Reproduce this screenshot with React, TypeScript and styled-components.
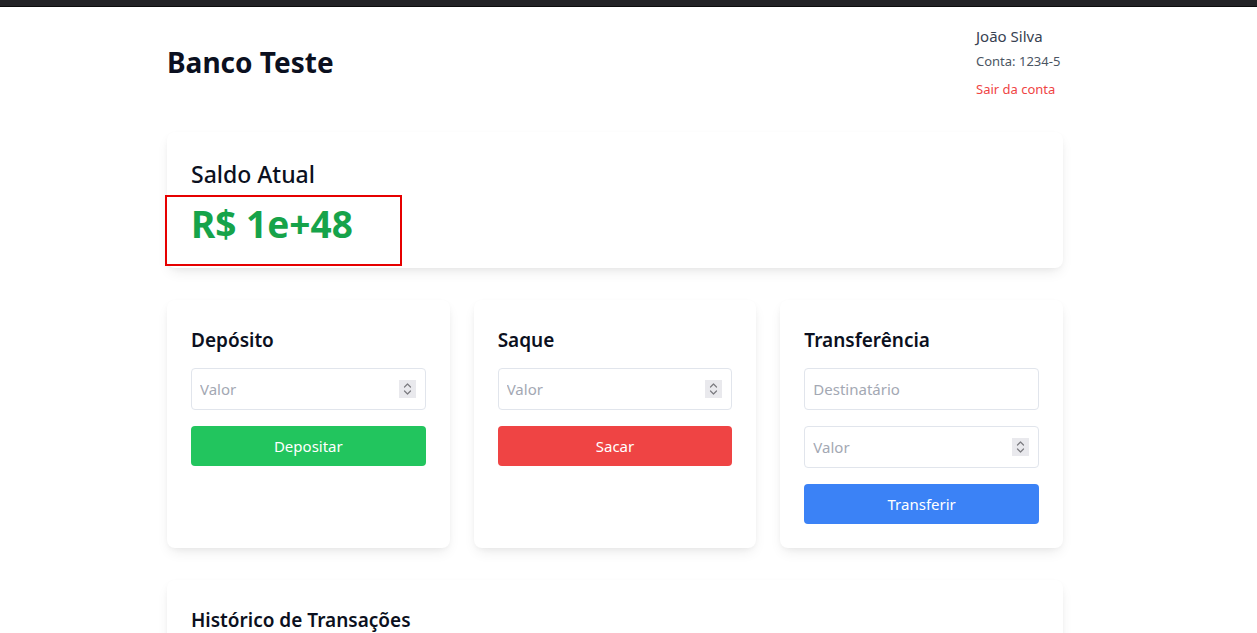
import React from "react";
import styled, { createGlobalStyle } from "styled-components";

const Global = createGlobalStyle`
  html, body { margin: 0; padding: 0; background: #ffffff; }
  body { font-family: "Noto Sans", "Open Sans", Arial, sans-serif; color: #111827; }
  * { box-sizing: border-box; }
`;

const TopBar = styled.div`
  height: 7px;
  background: #232327;
  border-bottom: 1px solid #0c0c0d;
`;

const Page = styled.div`
  width: 896px;
  margin-left: 167px;
  padding-top: 17px;
`;

const Header = styled.header`
  display: flex;
  justify-content: space-between;
  align-items: center;
  margin-bottom: 33px;
`;

const Brand = styled.h1`
  margin: 0;
  font-size: 28px;
  line-height: 36px;
  font-weight: 700;
  color: #0b1020;
`;

const UserBlock = styled.div`
  display: flex;
  flex-direction: column;
  align-items: flex-start;
  width: 87px;
`;

const UserName = styled.p`
  margin: 0;
  font-size: 15px;
  line-height: 24px;
  color: #374151;
  white-space: nowrap;
`;

const AccountNo = styled.p`
  margin: 3px 0 0;
  font-size: 13px;
  line-height: 20px;
  color: #4b5563;
  white-space: nowrap;
`;

const Logout = styled.button`
  margin-top: 8px;
  padding: 0;
  border: 0;
  background: none;
  font-family: inherit;
  font-size: 13px;
  line-height: 20px;
  color: #ef4444;
  cursor: pointer;
  white-space: nowrap;
`;

const Card = styled.section`
  background: #ffffff;
  border-radius: 8px;
  padding: 24px;
  min-width: 0;
  box-shadow: 0 6px 14px -3px rgba(0, 0, 0, 0.09), 0 2px 6px -2px rgba(0, 0, 0, 0.06);
`;

const BalanceTitle = styled.h2`
  margin: 2px 0 14px;
  font-size: 23px;
  line-height: 32px;
  font-weight: 500;
  color: #0b1020;
`;

const AmountWrap = styled.div`
  position: relative;
`;

const Amount = styled.p`
  margin: 0;
  font-size: 37px;
  line-height: 40px;
  font-weight: 700;
  color: #16a34a;
`;

const Highlight = styled.span`
  position: absolute;
  left: -26px;
  top: -9px;
  width: 237px;
  height: 71px;
  border: 2px solid #e60000;
  pointer-events: none;
`;

const Grid = styled.div`
  display: grid;
  grid-template-columns: repeat(3, minmax(0, 1fr));
  gap: 24px;
  margin: 32px 0;
`;

const ActionTitle = styled.h3`
  margin: 2px 0 14px;
  font-size: 19px;
  line-height: 28px;
  font-weight: 600;
  color: #0b1020;
`;

const Field = styled.div`
  display: flex;
  align-items: center;
  height: 42px;
  border: 1px solid #e1e5ec;
  border-radius: 4px;
  padding: 0 9px 0 8px;
  margin-bottom: 16px;
  background: #fff;
`;

const Input = styled.input`
  flex: 1;
  min-width: 0;
  width: 0;
  border: 0;
  outline: none;
  padding: 0;
  font-family: inherit;
  font-size: 15px;
  color: #111827;
  background: transparent;
  &::placeholder { color: #a3a8b3; }
`;

const Spinner = styled.span`
  flex: none;
  width: 17px;
  height: 18px;
  background: #e9e9ed;
  display: flex;
  align-items: center;
  justify-content: center;
`;

const Button = styled.button<{ $color: string }>`
  width: 100%;
  height: 40px;
  border: 0;
  border-radius: 4px;
  background: ${(p) => p.$color};
  color: #ffffff;
  font-family: inherit;
  font-size: 15px;
  cursor: pointer;
`;

const HistoryTitle = styled.h3`
  margin: 2px 0 0;
  font-size: 19px;
  line-height: 28px;
  font-weight: 600;
  color: #0b1020;
`;

const HistoryBody = styled.div`
  height: 120px;
`;

const SpinIcon = () => (
  <svg width="11" height="14" viewBox="0 0 11 14" fill="none" stroke="#7b7b80" strokeWidth="1.2" strokeLinecap="round" strokeLinejoin="round">
    <path d="M2.5 5 L5.5 2 L8.5 5" />
    <path d="M2.5 9 L5.5 12 L8.5 9" />
  </svg>
);

const NumberField = () => (
  <Field>
    <Input type="text" placeholder="Valor" />
    <Spinner>
      <SpinIcon />
    </Spinner>
  </Field>
);

const TextField = ({ placeholder }: { placeholder: string }) => (
  <Field>
    <Input type="text" placeholder={placeholder} />
  </Field>
);

export default function App() {
  return (
    <>
      <Global />
      <TopBar />
      <Page>
        <Header>
          <Brand>Banco Teste</Brand>
          <UserBlock>
            <UserName>João Silva</UserName>
            <AccountNo>Conta: 1234-5</AccountNo>
            <Logout>Sair da conta</Logout>
          </UserBlock>
        </Header>

        <Card>
          <BalanceTitle>Saldo Atual</BalanceTitle>
          <AmountWrap>
            <Amount>R$ 1e+48</Amount>
            <Highlight />
          </AmountWrap>
        </Card>

        <Grid>
          <Card>
            <ActionTitle>Depósito</ActionTitle>
            <NumberField />
            <Button $color="#22c55e">Depositar</Button>
          </Card>
          <Card>
            <ActionTitle>Saque</ActionTitle>
            <NumberField />
            <Button $color="#ef4444">Sacar</Button>
          </Card>
          <Card>
            <ActionTitle>Transferência</ActionTitle>
            <TextField placeholder="Destinatário" />
            <NumberField />
            <Button $color="#3b82f6">Transferir</Button>
          </Card>
        </Grid>

        <Card>
          <HistoryTitle>Histórico de Transações</HistoryTitle>
          <HistoryBody />
        </Card>
      </Page>
    </>
  );
}
